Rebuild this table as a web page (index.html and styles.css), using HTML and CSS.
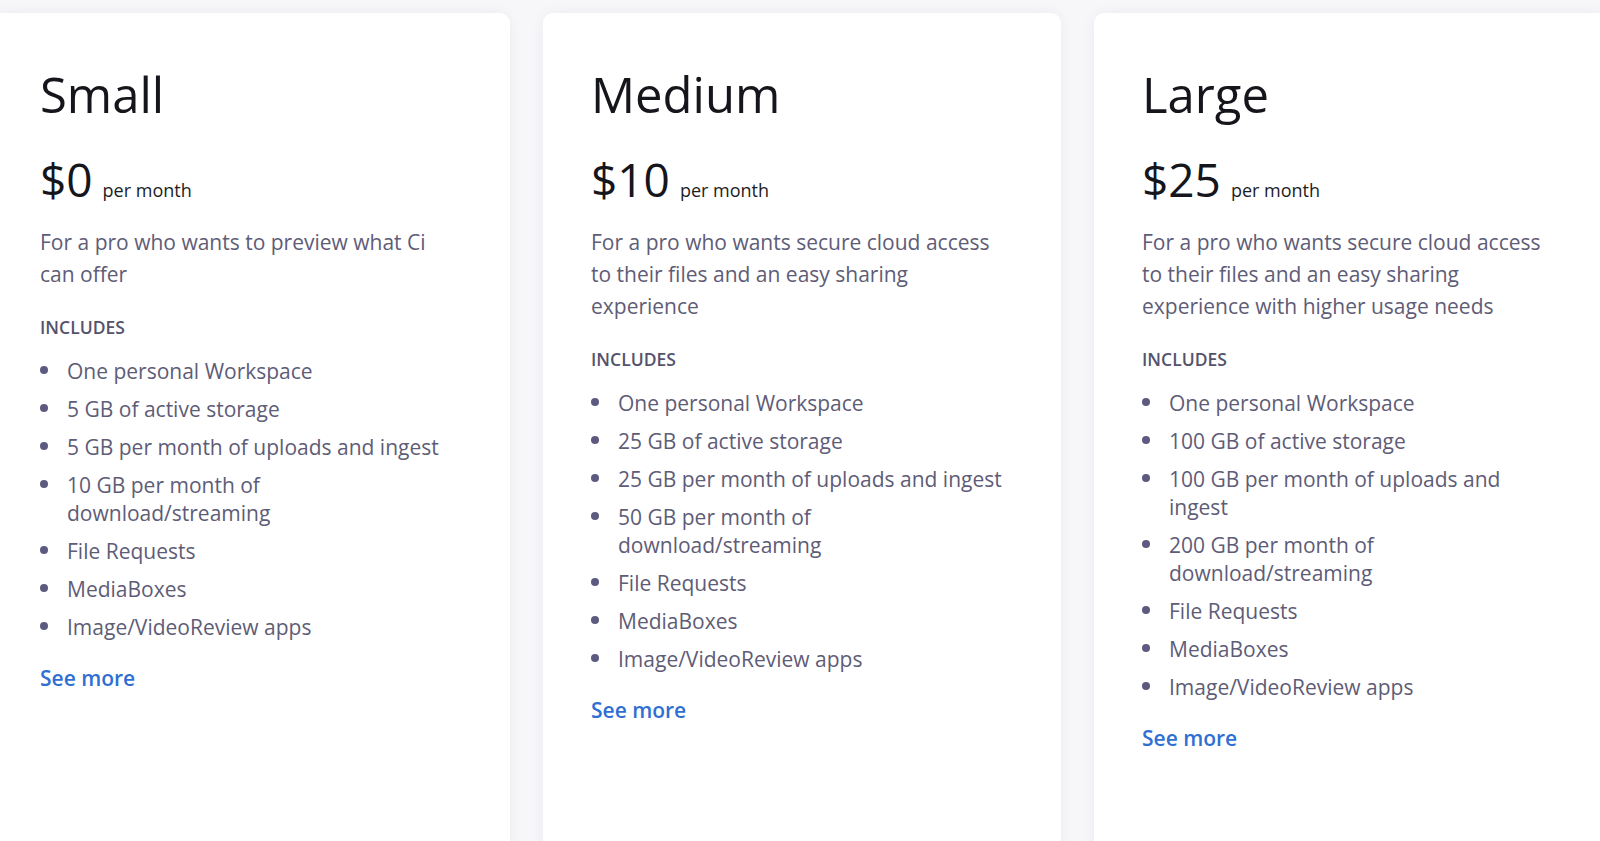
FILE: index.html
```html
<!DOCTYPE html>
<html lang="en">
<head>
<meta charset="utf-8">
<title>Plans</title>
<link rel="stylesheet" href="styles.css">
</head>
<body>
<main class="plans">
  <section class="card">
    <h2 class="plan-name">Small</h2>
    <div class="price"><span class="amount">$0</span><span class="period">per month</span></div>
    <p class="desc">For a pro who wants to preview what Ci can offer</p>
    <h3 class="includes">INCLUDES</h3>
    <ul class="features">
      <li>One personal Workspace</li>
      <li>5 GB of active storage</li>
      <li>5 GB per month of uploads and ingest</li>
      <li>10 GB per month of download/streaming</li>
      <li>File Requests</li>
      <li>MediaBoxes</li>
      <li>Image/VideoReview apps</li>
    </ul>
    <a class="more" href="#">See more</a>
  </section>
  <section class="card">
    <h2 class="plan-name">Medium</h2>
    <div class="price"><span class="amount">$10</span><span class="period">per month</span></div>
    <p class="desc">For a pro who wants secure cloud access to their files and an easy sharing experience</p>
    <h3 class="includes">INCLUDES</h3>
    <ul class="features">
      <li>One personal Workspace</li>
      <li>25 GB of active storage</li>
      <li>25 GB per month of uploads and ingest</li>
      <li>50 GB per month of download/streaming</li>
      <li>File Requests</li>
      <li>MediaBoxes</li>
      <li>Image/VideoReview apps</li>
    </ul>
    <a class="more" href="#">See more</a>
  </section>
  <section class="card">
    <h2 class="plan-name">Large</h2>
    <div class="price"><span class="amount">$25</span><span class="period">per month</span></div>
    <p class="desc">For a pro who wants secure cloud access to their files and an easy sharing experience with higher usage needs</p>
    <h3 class="includes">INCLUDES</h3>
    <ul class="features">
      <li>One personal Workspace</li>
      <li>100 GB of active storage</li>
      <li>100 GB per month of uploads and ingest</li>
      <li>200 GB per month of download/streaming</li>
      <li>File Requests</li>
      <li>MediaBoxes</li>
      <li>Image/VideoReview apps</li>
    </ul>
    <a class="more" href="#">See more</a>
  </section>
</main>
</body>
</html>
```
FILE: styles.css
```css
html, body {
  margin: 0;
  padding: 0;
}
body {
  background: #f7f7fa;
  font-family: "Open Sans", "Noto Sans", "Liberation Sans", sans-serif;
  overflow: hidden;
  height: 841px;
}
.plans {
  display: flex;
  gap: 33px;
  margin-left: -8px;
  padding-top: 13px;
}
.card {
  flex: 0 0 518px;
  box-sizing: border-box;
  min-height: 900px;
  background: #ffffff;
  border-radius: 10px;
  padding: 53px 48px;
  box-shadow: 0 0 14px rgba(40, 40, 80, 0.05);
}
.plan-name {
  margin: 0;
  font-size: 49px;
  line-height: 56px;
  font-weight: 400;
  color: #15151c;
}
.price {
  margin-top: 31px;
  line-height: 52px;
  color: #15151c;
}
.amount {
  font-size: 46px;
  font-weight: 500;
}
.period {
  font-size: 18px;
  margin-left: 10px;
  color: #1c1c24;
}
.desc {
  margin: 9px 0 0;
  font-size: 21px;
  line-height: 32px;
  color: #5e5c76;
}
.includes {
  margin: 25px 0 0;
  font-size: 17.5px;
  line-height: 24px;
  font-weight: 600;
  color: #55536c;
}
.features {
  list-style: none;
  margin: 18px 0 0;
  padding: 0;
}
.features li {
  position: relative;
  padding-left: 27px;
  font-size: 21px;
  line-height: 28px;
  color: #5e5c76;
  margin-bottom: 10px;
}
.features li:last-child {
  margin-bottom: 0;
}
.features li::before {
  content: "";
  position: absolute;
  left: 0;
  top: 9px;
  width: 8px;
  height: 8px;
  border-radius: 50%;
  background: #5d5a80;
}
.more {
  display: block;
  margin-top: 23px;
  font-size: 21px;
  line-height: 28px;
  font-weight: 600;
  color: #2f6fd3;
  text-decoration: none;
}
```
